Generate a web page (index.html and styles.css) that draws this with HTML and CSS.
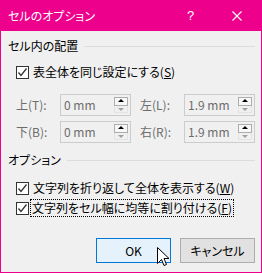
FILE: index.html
```html
<!DOCTYPE html>
<html lang="ja">
<head>
    <meta charset="UTF-8">
    <title>セルのオプション</title>
    <link rel="stylesheet" href="styles.css">
</head>
<body>
<div class="window">
    <!-- Title bar -->
    <div class="titlebar">
        <span class="title">セルのオプション</span>
        <span class="help">?</span>
        <svg class="close" width="10" height="10" viewBox="0 0 10 10">
            <path d="M0.5 0.5 L9.5 9.5 M9.5 0.5 L0.5 9.5" stroke="#fff" stroke-width="1.2" fill="none"/>
        </svg>
    </div>

    <div class="content">
        <!-- Cell margins group -->
        <div class="group-head"><span>セル内の配置</span><i class="rule"></i></div>
        <label class="check first">
            <span class="box"><svg width="11" height="11" viewBox="0 0 11 11"><path d="M1.5 5.5 L4 8.5 L9.5 1.5" stroke="#333" stroke-width="1.3" fill="none"/></svg></span>
            <span class="text">表全体を同じ設定にする(<u>S</u>)</span>
        </label>

        <div class="margins">
            <span class="lbl">上(T):</span>
            <div class="spin"><span class="val">0 mm</span><span class="arrows"><span class="up"></span><span class="down"></span></span></div>
            <span class="lbl">左(L):</span>
            <div class="spin"><span class="val">1.9 mm</span><span class="arrows"><span class="up"></span><span class="down"></span></span></div>
            <span class="lbl">下(B):</span>
            <div class="spin"><span class="val">0 mm</span><span class="arrows"><span class="up"></span><span class="down"></span></span></div>
            <span class="lbl">右(R):</span>
            <div class="spin"><span class="val">1.9 mm</span><span class="arrows"><span class="up"></span><span class="down"></span></span></div>
        </div>

        <!-- Options group -->
        <div class="group-head second"><span>オプション</span><i class="rule"></i></div>
        <label class="check wrap">
            <span class="box"><svg width="11" height="11" viewBox="0 0 11 11"><path d="M1.5 5.5 L4 8.5 L9.5 1.5" stroke="#333" stroke-width="1.3" fill="none"/></svg></span>
            <span class="text">文字列を折り返して全体を表示する(<u>W</u>)</span>
        </label>
        <label class="check fit">
            <span class="box"><svg width="11" height="11" viewBox="0 0 11 11"><path d="M1.5 5.5 L4 8.5 L9.5 1.5" stroke="#333" stroke-width="1.3" fill="none"/></svg></span>
            <span class="text focused">文字列をセル幅に均等に割り付ける(<u>F</u>)</span>
        </label>

        <div class="buttons">
            <button class="btn default">OK</button>
            <button class="btn">キャンセル</button>
        </div>
    </div>

    <!-- Mouse pointer over the OK button -->
    <svg class="cursor" width="13" height="20" viewBox="0 0 13 20">
        <path d="M0.5 0.5 L0.5 16.5 L4.5 12.5 L7 18.5 L9.5 17.5 L7 11.5 L12 11.5 Z" fill="#fff" stroke="#000" stroke-width="1"/>
    </svg>
</div>
</body>
</html>
```

FILE: styles.css
```css
/* Page */
body {
    margin: 0;
    font-family: "Noto Sans CJK JP", sans-serif;
    font-size: 12px;
    line-height: 16px;
    font-feature-settings: "palt";
    color: #000;
}

/* Dialog window */
.window {
    position: relative;
    width: 262px;
    height: 273px;
    box-sizing: border-box;
    border: 1px solid #ec008c;
    border-top: none;
    background: #f0f0f0;
}

.titlebar {
    display: flex;
    align-items: center;
    height: 31px;
    margin: 0 -1px;
    padding-left: 8px;
    background: #ec008c;
    color: #fff;
}

.title {
    flex: 1;
}

.help {
    width: 10px;
    margin-right: 35px;
    font-family: "Liberation Sans", sans-serif;
    font-size: 13px;
}

.close {
    margin-right: 20px;
}

.content {
    display: flex;
    flex-direction: column;
    padding: 0 6px 0 7px;
}

/* Group headings with a rule */
.group-head {
    display: flex;
    align-items: center;
    margin-top: 7px;
}

.group-head.second {
    margin-top: 9px;
}

.rule {
    flex: 1;
    height: 1px;
    margin-left: 6px;
    background: #dcdcdc;
}

/* Check boxes */
.check {
    display: flex;
    align-items: center;
    margin-left: 8px;
    height: 16px;
}

.check.first {
    margin-top: 10px;
}

.check.wrap {
    margin-top: 12px;
}

.check.fit {
    margin-top: 4px;
}

.box {
    display: flex;
    align-items: center;
    justify-content: center;
    width: 13px;
    height: 13px;
    box-sizing: border-box;
    border: 1px solid #333;
    background: #fff;
    margin-right: 4px;
}

.text u {
    text-decoration-thickness: 1px;
}

.focused {
    outline: 1px dotted #000;
    outline-offset: 0;
    padding: 0 1px;
    margin-left: -2px;
}

/* Margin spin boxes */
.margins {
    display: grid;
    grid-template-columns: 44px 80px 44px 71px;
    row-gap: 5px;
    margin: 14px 0 0 8px;
    color: #6d6d6d;
}

.lbl {
    display: flex;
    align-items: center;
}

.spin {
    display: flex;
    align-items: center;
    width: 71px;
    height: 22px;
    box-sizing: border-box;
    border: 1px solid #cccccc;
    background: #f0f0f0;
    padding: 0 2px 0 3px;
}

.val {
    flex: 1;
}

.arrows {
    display: flex;
    flex-direction: column;
    width: 14px;
    height: 16px;
}

.up, .down {
    flex: 1;
    position: relative;
    box-sizing: border-box;
}

.up {
    border: 1px solid #adadad;
    background: #f7f7f7;
}

.down {
    border: 1px solid #e3e3e3;
    border-top: none;
}

.up::after, .down::after {
    content: "";
    position: absolute;
    left: 50%;
    top: 50%;
    margin: -2px 0 0 -3px;
    border-left: 3px solid transparent;
    border-right: 3px solid transparent;
}

.up::after {
    border-bottom: 3px solid #000;
}

.down::after {
    margin-top: -1px;
    border-top: 3px solid #a0a0a0;
}

/* Dialog buttons */
.buttons {
    display: flex;
    justify-content: flex-end;
    gap: 9px;
    margin-top: 22px;
}

.btn {
    width: 75px;
    height: 25px;
    padding: 0;
    font: inherit;
    font-feature-settings: "palt";
    color: #000;
    border: 1px solid #adadad;
    background: #e1e1e1;
}

.btn.default {
    border-color: #0078d7;
    background: #e5f1fb;
}

.cursor {
    position: absolute;
    left: 156px;
    top: 247px;
}
```
